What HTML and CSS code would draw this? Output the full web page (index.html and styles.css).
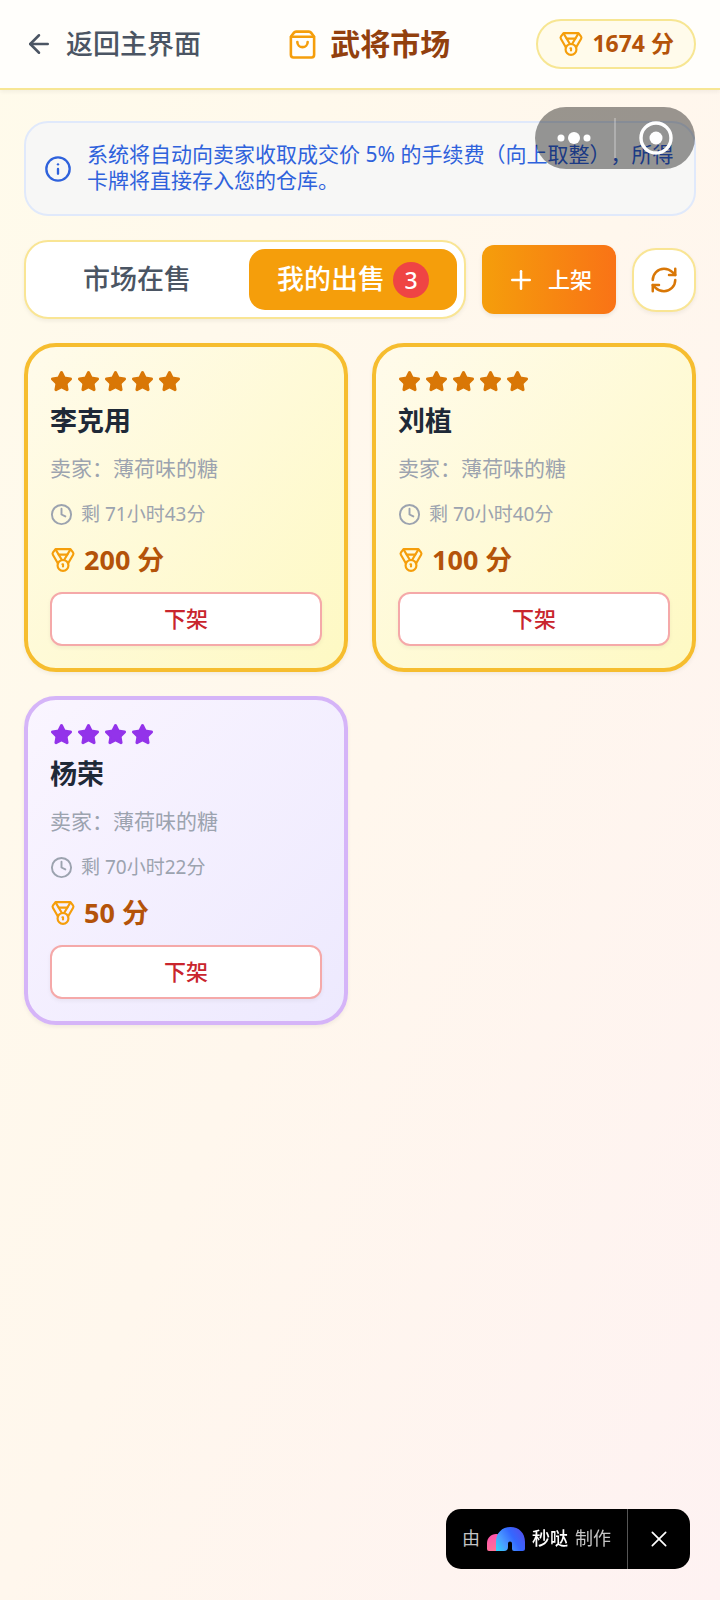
FILE: index.html
```html
<!DOCTYPE html>
<html lang="zh-CN">

<head>
    <meta charset="UTF-8">
    <meta name="viewport" content="width=device-width, initial-scale=1.0">
    <title>武将市场</title>
    <link rel="stylesheet" href="styles.css">
</head>

<body>
    <!-- Icon sprite -->
    <svg class="sprite" aria-hidden="true">
        <symbol id="icon-back" viewBox="0 0 24 24">
            <path d="m12 19-7-7 7-7" />
            <path d="M19 12H5" />
        </symbol>
        <symbol id="icon-bag" viewBox="0 0 24 24">
            <path d="M16 10a4 4 0 0 1-8 0" />
            <path d="M3.103 6.034h17.794" />
            <path d="M3.4 5.467a2 2 0 0 0-.4 1.2V20a2 2 0 0 0 2 2h14a2 2 0 0 0 2-2V6.667a2 2 0 0 0-.4-1.2l-2-2.667A2 2 0 0 0 17 2H7a2 2 0 0 0-1.6.8z" />
        </symbol>
        <symbol id="icon-medal" viewBox="0 0 24 24">
            <path d="M7.21 15 2.66 7.14a2 2 0 0 1 .13-2.2L4.4 2.8A2 2 0 0 1 6 2h12a2 2 0 0 1 1.6.8l1.6 2.14a2 2 0 0 1 .14 2.2L16.79 15" />
            <path d="M11 12 5.12 2.2" />
            <path d="m13 12 5.88-9.8" />
            <path d="M8 7h8" />
            <circle cx="12" cy="17" r="5" />
            <path d="M12 18v-2h-.5" />
        </symbol>
        <symbol id="icon-info" viewBox="0 0 24 24">
            <circle cx="12" cy="12" r="10" />
            <path d="M12 16v-4" />
            <path d="M12 8h.01" />
        </symbol>
        <symbol id="icon-plus" viewBox="0 0 24 24">
            <path d="M5 12h14" />
            <path d="M12 5v14" />
        </symbol>
        <symbol id="icon-refresh" viewBox="0 0 24 24">
            <path d="M3 12a9 9 0 0 1 9-9 9.75 9.75 0 0 1 6.74 2.74L21 8" />
            <path d="M21 3v5h-5" />
            <path d="M21 12a9 9 0 0 1-9 9 9.75 9.75 0 0 1-6.74-2.74L3 16" />
            <path d="M8 16H3v5" />
        </symbol>
        <symbol id="icon-star" viewBox="0 0 24 24">
            <path d="M11.525 2.295a.53.53 0 0 1 .95 0l2.31 4.679a2.123 2.123 0 0 0 1.595 1.16l5.166.756a.53.53 0 0 1 .294.904l-3.736 3.638a2.123 2.123 0 0 0-.611 1.878l.882 5.14a.53.53 0 0 1-.771.56l-4.618-2.428a2.122 2.122 0 0 0-1.973 0L6.396 21.01a.53.53 0 0 1-.77-.56l.881-5.139a2.122 2.122 0 0 0-.611-1.879L2.16 9.795a.53.53 0 0 1 .294-.906l5.165-.755a2.122 2.122 0 0 0 1.597-1.16z" />
        </symbol>
        <symbol id="icon-clock" viewBox="0 0 24 24">
            <circle cx="12" cy="12" r="10" />
            <path d="M12 6v6l4 2" />
        </symbol>
        <symbol id="icon-close" viewBox="0 0 24 24">
            <path d="M4 4l16 16" />
            <path d="M20 4 4 20" />
        </symbol>
    </svg>

    <header class="header">
        <a class="back-link" href="#">
            <svg class="icon icon-lg"><use href="#icon-back" /></svg>
            <span class="label">返回主界面</span>
        </a>
        <h1 class="title">
            <svg class="icon title-icon"><use href="#icon-bag" /></svg>
            <span class="label">武将市场</span>
        </h1>
        <div class="points">
            <svg class="icon medal"><use href="#icon-medal" /></svg>
            <span class="label">1674 分</span>
        </div>
    </header>

    <main class="content">
        <div class="notice">
            <svg class="icon notice-icon"><use href="#icon-info" /></svg>
            <p class="label">系统将自动向卖家收取成交价 5% 的手续费（向上取整），所得卡牌将直接存入您的仓库。</p>
        </div>

        <div class="toolbar">
            <div class="tabs">
                <button class="tab" type="button"><span class="label">市场在售</span></button>
                <button class="tab tab-active" type="button">
                    <span class="label">我的出售</span>
                    <span class="count">3</span>
                </button>
            </div>
            <button class="list-button" type="button">
                <svg class="icon icon-lg"><use href="#icon-plus" /></svg>
                <span class="label">上架</span>
            </button>
            <button class="refresh-button" type="button" aria-label="刷新">
                <svg class="icon icon-lg"><use href="#icon-refresh" /></svg>
            </button>
        </div>

        <div class="cards">
            <article class="card card-gold">
                <div class="stars">
                    <svg class="star"><use href="#icon-star" /></svg>
                    <svg class="star"><use href="#icon-star" /></svg>
                    <svg class="star"><use href="#icon-star" /></svg>
                    <svg class="star"><use href="#icon-star" /></svg>
                    <svg class="star"><use href="#icon-star" /></svg>
                </div>
                <h2 class="name">李克用</h2>
                <p class="seller">卖家：薄荷味的糖</p>
                <p class="time"><svg class="icon clock"><use href="#icon-clock" /></svg>剩 71小时43分</p>
                <p class="price"><svg class="icon medal"><use href="#icon-medal" /></svg>200 分</p>
                <button class="remove-button" type="button">下架</button>
            </article>

            <article class="card card-gold">
                <div class="stars">
                    <svg class="star"><use href="#icon-star" /></svg>
                    <svg class="star"><use href="#icon-star" /></svg>
                    <svg class="star"><use href="#icon-star" /></svg>
                    <svg class="star"><use href="#icon-star" /></svg>
                    <svg class="star"><use href="#icon-star" /></svg>
                </div>
                <h2 class="name">刘植</h2>
                <p class="seller">卖家：薄荷味的糖</p>
                <p class="time"><svg class="icon clock"><use href="#icon-clock" /></svg>剩 70小时40分</p>
                <p class="price"><svg class="icon medal"><use href="#icon-medal" /></svg>100 分</p>
                <button class="remove-button" type="button">下架</button>
            </article>

            <article class="card card-purple">
                <div class="stars">
                    <svg class="star"><use href="#icon-star" /></svg>
                    <svg class="star"><use href="#icon-star" /></svg>
                    <svg class="star"><use href="#icon-star" /></svg>
                    <svg class="star"><use href="#icon-star" /></svg>
                </div>
                <h2 class="name">杨荣</h2>
                <p class="seller">卖家：薄荷味的糖</p>
                <p class="time"><svg class="icon clock"><use href="#icon-clock" /></svg>剩 70小时22分</p>
                <p class="price"><svg class="icon medal"><use href="#icon-medal" /></svg>50 分</p>
                <button class="remove-button" type="button">下架</button>
            </article>
        </div>
    </main>

    <!-- Mini program menu -->
    <div class="capsule">
        <button class="capsule-button" type="button" aria-label="更多">
            <svg width="36" height="36" viewBox="0 0 36 36" fill="#fff">
                <circle cx="4" cy="18" r="3.5" />
                <circle cx="17" cy="18" r="6" />
                <circle cx="30" cy="18" r="3.5" />
            </svg>
        </button>
        <button class="capsule-button" type="button" aria-label="关闭">
            <svg width="36" height="36" viewBox="0 0 36 36">
                <circle cx="18" cy="18" r="15" fill="none" stroke="#fff" stroke-width="3.4" />
                <circle cx="18" cy="18" r="6.5" fill="#fff" />
            </svg>
        </button>
    </div>

    <!-- Made-with badge -->
    <div class="badge">
        <a class="badge-link" href="#">
            <span class="label">由</span>
            <svg class="badge-logo" viewBox="0 0 38 24">
                <defs>
                    <linearGradient id="logo-pink" x1="0" y1="0" x2="0.3" y2="1">
                        <stop offset="0" stop-color="#ff4fb0" />
                        <stop offset="1" stop-color="#ff7096" />
                    </linearGradient>
                    <linearGradient id="logo-blue" x1="0" y1="1" x2="1" y2="0.5">
                        <stop offset="0" stop-color="#2fd6f7" />
                        <stop offset="0.35" stop-color="#4a9bff" />
                        <stop offset="0.7" stop-color="#3468ff" />
                        <stop offset="1" stop-color="#4a55f0" />
                    </linearGradient>
                </defs>
                <path d="M0 22V16C0 11 4 7 9 7c3 0 6 2 6 6v11H2a2 2 0 0 1-2-2z" fill="url(#logo-pink)" />
                <path d="M9 24V15C9 6 15 0 23.500 0S38 6 38 15v6.500a2.500 2.500 0 0 1-2.500 2.500H27a2 2 0 0 1-2-2v-5.500a2 2 0 0 0-4 0V20a4 4 0 0 1-4 4z" fill="url(#logo-blue)" />
            </svg>
            <strong class="label">秒哒</strong>
            <span class="label">制作</span>
        </a>
        <button class="badge-close" type="button" aria-label="关闭">
            <svg class="icon close-icon"><use href="#icon-close" /></svg>
        </button>
    </div>
</body>

</html>
```

FILE: styles.css
```css
* {
    box-sizing: border-box;
}

body {
    margin: 0;
    min-height: 100vh;
    font-family: "Noto Sans", "Noto Sans CJK SC", sans-serif;
    text-spacing-trim: space-all;
    color: #1f2937;
    background: linear-gradient(to bottom right, #fffbeb, #fff7ed, #fef2f2);
}

h1,
h2,
p {
    margin: 0;
}

button {
    font-family: inherit;
    cursor: pointer;
}

/* CJK glyphs sit low in the line box, lift them to the icon centre */
.label {
    padding-bottom: 4px;
}

.sprite {
    position: absolute;
    width: 0;
    height: 0;
}

.icon {
    flex-shrink: 0;
    width: 24px;
    height: 24px;
    fill: none;
    stroke: currentColor;
    stroke-width: 2;
    stroke-linecap: round;
    stroke-linejoin: round;
}

.icon-lg {
    width: 30px;
    height: 30px;
}

.medal {
    width: 26px;
    height: 26px;
    color: #f59e0b;
}

/* Header */
.header {
    display: flex;
    justify-content: space-between;
    align-items: center;
    height: 90px;
    padding: 0 24px;
    background-color: #fffefb;
    border-bottom: 2px solid #f7e693;
    box-shadow: 0 2px 4px rgba(0, 0, 0, 0.05);
}

.back-link {
    display: flex;
    align-items: center;
    gap: 12px;
    font-size: 27px;
    font-weight: 500;
    color: #4b5563;
    text-decoration: none;
}

.title {
    display: flex;
    align-items: center;
    gap: 12px;
    font-size: 30px;
    color: #92400e;
}

.title-icon {
    width: 31px;
    height: 31px;
    color: #f59e0b;
}

.points {
    display: flex;
    align-items: center;
    gap: 8px;
    height: 50px;
    padding: 0 20px;
    font-size: 23px;
    font-weight: 700;
    color: #b45309;
    background-color: #fffbeb;
    border: 2px solid #f7e693;
    border-radius: 25px;
}

/* Content */
.content {
    display: flex;
    flex-direction: column;
    gap: 24px;
    padding: 31px 24px;
}

.notice {
    display: flex;
    align-items: center;
    gap: 15px;
    height: 95px;
    padding: 0 12px 0 18px;
    font-size: 21px;
    line-height: 26px;
    color: #2f62dc;
    background-color: #f7f7f6;
    border: 2px solid #e0e9fb;
    border-radius: 24px;
}

.notice-icon {
    width: 28px;
    height: 28px;
}

.toolbar {
    display: flex;
    align-items: center;
    gap: 16px;
}

.tabs {
    flex: 1;
    display: flex;
    gap: 8px;
    padding: 7px;
    background-color: #fff;
    border: 2px solid #f9e594;
    border-radius: 24px;
    box-shadow: 0 2px 4px rgba(0, 0, 0, 0.06);
}

.tab {
    flex: 1;
    display: flex;
    justify-content: center;
    align-items: center;
    gap: 8px;
    height: 61px;
    padding: 0;
    font-size: 27px;
    font-weight: 500;
    color: #4b5563;
    background: none;
    border: none;
    border-radius: 16px;
}

.tab-active {
    color: #fff;
    background-color: #f59e0b;
}

.count {
    width: 36px;
    height: 36px;
    font-size: 23px;
    line-height: 36px;
    background-color: #ef4444;
    border-radius: 50%;
}

.list-button {
    display: flex;
    justify-content: center;
    align-items: center;
    gap: 12px;
    width: 134px;
    height: 69px;
    padding: 0;
    font-size: 22px;
    font-weight: 500;
    color: #fff;
    background: linear-gradient(to right, #f59e0b, #f97316);
    border: none;
    border-radius: 12px;
    box-shadow: 0 2px 4px rgba(0, 0, 0, 0.08);
}

.refresh-button {
    display: flex;
    justify-content: center;
    align-items: center;
    width: 64px;
    height: 64px;
    padding: 0;
    color: #d97706;
    background-color: #fff;
    border: 2px solid #f9e594;
    border-radius: 24px;
    box-shadow: 0 2px 4px rgba(0, 0, 0, 0.06);
}

/* Cards */
.cards {
    display: grid;
    grid-template-columns: 1fr 1fr;
    gap: 24px;
}

.card {
    padding: 22px;
    border: 4px solid;
    border-radius: 32px;
    box-shadow: 0 2px 4px rgba(0, 0, 0, 0.06);
}

.card-gold {
    background: linear-gradient(to bottom right, #fffbeb, #fef9c3);
    border-color: #f6bd2f;
}

.card-purple {
    background: linear-gradient(to bottom right, #faf5ff, #ede9fe);
    border-color: #d5b4f8;
}

.stars {
    display: flex;
    align-items: center;
    gap: 4px;
    height: 25px;
    color: #d97706;
}

.card-purple .stars {
    color: #9333ea;
}

.star {
    width: 23px;
    height: 23px;
    fill: currentColor;
    stroke: currentColor;
    stroke-width: 2;
    stroke-linejoin: round;
}

.name {
    margin-top: 8px;
    font-size: 27px;
    line-height: 38px;
}

.seller {
    margin-top: 12px;
    font-size: 21px;
    line-height: 32px;
    color: #9ca3af;
}

.time {
    display: flex;
    align-items: center;
    gap: 8px;
    margin-top: 16px;
    font-size: 19px;
    line-height: 28px;
    color: #9ca3af;
}

.clock {
    width: 23px;
    height: 23px;
}

.price {
    display: flex;
    align-items: center;
    gap: 8px;
    margin-top: 14px;
    font-size: 27px;
    font-weight: 700;
    line-height: 36px;
    color: #b45309;
}

.remove-button {
    width: 100%;
    height: 54px;
    margin-top: 14px;
    padding: 0 0 4px;
    font-size: 22px;
    font-weight: 500;
    color: #c9252d;
    background-color: #fff;
    border: 2px solid #f5a9a9;
    border-radius: 12px;
    box-shadow: 0 2px 4px rgba(0, 0, 0, 0.05);
}

/* Mini program menu */
.capsule {
    position: fixed;
    top: 107px;
    right: 25px;
    display: flex;
    width: 160px;
    height: 62px;
    background-color: rgba(0, 0, 0, 0.4);
    border-radius: 31px;
}

.capsule-button {
    flex: 1;
    display: flex;
    justify-content: center;
    align-items: center;
    margin: 11px 0;
    padding: 0;
    background: none;
    border: none;
}

.capsule-button + .capsule-button {
    border-left: 2px solid rgba(255, 255, 255, 0.25);
}

/* Made-with badge */
.badge {
    position: fixed;
    right: 30px;
    bottom: 31px;
    display: flex;
    height: 60px;
    color: #c4c4c4;
    background-color: #000;
    border-radius: 15px;
}

.badge-link {
    display: flex;
    align-items: center;
    gap: 7px;
    padding: 0 16px;
    font-size: 18px;
    color: inherit;
    text-decoration: none;
}

.badge-logo {
    width: 38px;
    height: 24px;
}

.badge-link strong {
    font-weight: 500;
    color: #fff;
}

.badge-close {
    display: flex;
    justify-content: center;
    align-items: center;
    width: 63px;
    padding: 0;
    color: #fff;
    background: none;
    border: none;
    border-left: 1px solid #555;
}

.close-icon {
    width: 20px;
    height: 20px;
}
```
